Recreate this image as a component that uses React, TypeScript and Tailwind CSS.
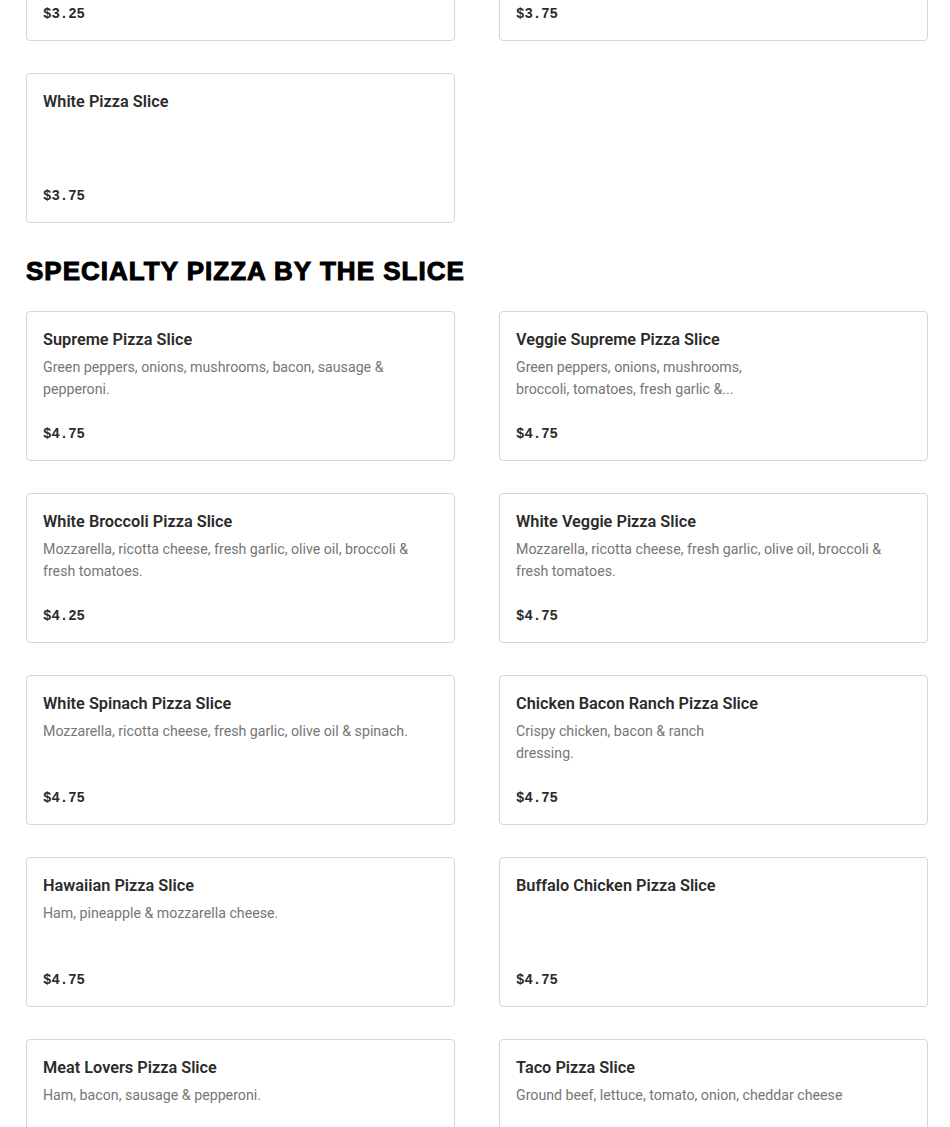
import React from "react";

type Item = { name: string; desc?: string; price: string; narrow?: boolean };

const top: Item[] = [
  { name: "Cheese Pizza Slice", desc: "", price: "$3.25" },
  { name: "Pepperoni Pizza Slice", desc: "", price: "$3.75" },
  { name: "White Pizza Slice", price: "$3.75" },
];

const specialty: Item[] = [
  { name: "Supreme Pizza Slice", desc: "Green peppers, onions, mushrooms, bacon, sausage & pepperoni.", price: "$4.75" },
  { name: "Veggie Supreme Pizza Slice", desc: "Green peppers, onions, mushrooms, broccoli, tomatoes, fresh garlic &...", price: "$4.75", narrow: true },
  { name: "White Broccoli Pizza Slice", desc: "Mozzarella, ricotta cheese, fresh garlic, olive oil, broccoli & fresh tomatoes.", price: "$4.25" },
  { name: "White Veggie Pizza Slice", desc: "Mozzarella, ricotta cheese, fresh garlic, olive oil, broccoli & fresh tomatoes.", price: "$4.75" },
  { name: "White Spinach Pizza Slice", desc: "Mozzarella, ricotta cheese, fresh garlic, olive oil & spinach.", price: "$4.75" },
  { name: "Chicken Bacon Ranch Pizza Slice", desc: "Crispy chicken, bacon & ranch dressing.", price: "$4.75", narrow: true },
  { name: "Hawaiian Pizza Slice", desc: "Ham, pineapple & mozzarella cheese.", price: "$4.75" },
  { name: "Buffalo Chicken Pizza Slice", price: "$4.75" },
  { name: "Meat Lovers Pizza Slice", desc: "Ham, bacon, sausage & pepperoni.", price: "$4.75" },
  { name: "Taco Pizza Slice", desc: "Ground beef, lettuce, tomato, onion, cheddar cheese", price: "$4.75" },
];

function Card({ item }: { item: Item }) {
  return (
    <div className="flex h-[150px] flex-col rounded-[4px] border border-[#d6d6d6] bg-white p-4">
      <div className="text-[16.3px] font-semibold leading-6 text-[#2b2b2b]">{item.name}</div>
      {item.desc ? (
        <div
          className={
            "mt-[4px] line-clamp-2 text-[14.2px] leading-[22px] text-[#767676] " +
            (item.narrow ? "max-w-[240px]" : "")
          }
        >
          {item.desc}
        </div>
      ) : null}
      <div className="mt-auto font-['Liberation_Mono','DejaVu_Sans_Mono',monospace] text-[14px] font-bold leading-5 text-[#2b2b2b]">
        {item.price}
      </div>
    </div>
  );
}

export default function App() {
  return (
    <div className="min-h-[1127px] bg-white pl-[26px] font-['Roboto','Noto_Sans',sans-serif]">
      <div className="-mt-[109px] grid grid-cols-[429px_429px] gap-x-[44px] gap-y-[32px]">
        {top.map((it) => (
          <Card key={it.name} item={it} />
        ))}
      </div>
      <h2 className="mt-[36px] mb-[28px] font-['Liberation_Sans',Arial,sans-serif] text-[26px] font-bold uppercase leading-6 tracking-[1px] text-black [-webkit-text-stroke:1px_black]">
        Specialty Pizza by the Slice
      </h2>
      <div className="grid grid-cols-[429px_429px] gap-x-[44px] gap-y-[32px]">
        {specialty.map((it) => (
          <Card key={it.name} item={it} />
        ))}
      </div>
    </div>
  );
}
